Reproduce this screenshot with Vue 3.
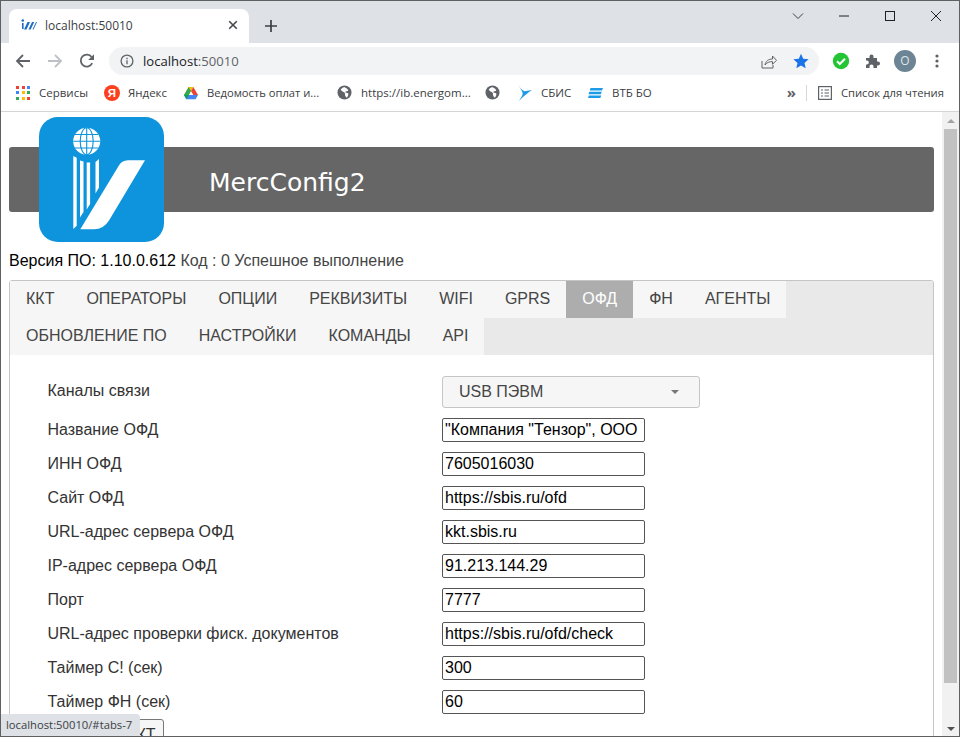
<script setup>
const tabs = [
  'ККТ', 'ОПЕРАТОРЫ', 'ОПЦИИ', 'РЕКВИЗИТЫ', 'WIFI', 'GPRS', 'ОФД', 'ФН', 'АГЕНТЫ',
  'ОБНОВЛЕНИЕ ПО', 'НАСТРОЙКИ', 'КОМАНДЫ', 'API'
]
const rows = [
  ['Название ОФД', '"Компания "Тензор", ООО'],
  ['ИНН ОФД', '7605016030'],
  ['Сайт ОФД', 'https://sbis.ru/ofd'],
  ['URL-адрес сервера ОФД', 'kkt.sbis.ru'],
  ['IP-адрес сервера ОФД', '91.213.144.29'],
  ['Порт', '7777'],
  ['URL-адрес проверки фиск. документов', 'https://sbis.ru/ofd/check'],
  ['Таймер С! (сек)', '300'],
  ['Таймер ФН (сек)', '60']
]
const gridColors = ['#ea4335', '#ea4335', '#4285f4', '#4285f4', '#fbbc04', '#34a853', '#34a853', '#fbbc04', '#ea4335']
</script>

<template>
  <div class="window">
    <div class="tabstrip">
      <div class="tab">
        <svg class="fav" width="16" height="16" viewBox="0 0 16 16">
          <circle cx="1.800" cy="3.500" r="1.300" fill="#1f6fc0" />
          <path d="M1 6h1.600v6H1zM3 12.500L6.500 5H9l-3.500 7.500zM7.500 12.500L11 5h2.200L9.700 12.500zM11.500 12.500L15 5h1l-3.500 7.500z" fill="#1f6fc0" />
        </svg>
        <span class="tabtitle">localhost:50010</span>
        <svg class="tabx" width="10" height="10" viewBox="0 0 10 10"><path d="M1.200 1.200l7.600 7.600M8.800 1.200l-7.600 7.600" stroke="#45484c" stroke-width="1.600" /></svg>
      </div>
      <svg class="plus" width="12" height="12" viewBox="0 0 12 12"><path d="M6 0v12M0 6h12" stroke="#3c4043" stroke-width="1.700" /></svg>
      <div class="winctl">
        <svg width="12" height="12" viewBox="0 0 12 12"><path d="M1 3.500l5 5 5-5" fill="none" stroke="#3c4043" /></svg>
        <svg width="12" height="12" viewBox="0 0 12 12"><path d="M1 6h10" stroke="#202124" /></svg>
        <svg width="12" height="12" viewBox="0 0 12 12"><rect x="1.500" y="1.500" width="9" height="9" fill="none" stroke="#202124" /></svg>
        <svg width="12" height="12" viewBox="0 0 12 12"><path d="M1 1l10 10M11 1L1 11" stroke="#202124" /></svg>
      </div>
    </div>

    <div class="toolbar">
      <svg class="navicon" width="16" height="16" viewBox="0 0 16 16"><path d="M15 8H2M8 2L2 8l6 6" fill="none" stroke="#5f6368" stroke-width="1.800" /></svg>
      <svg class="navicon" width="16" height="16" viewBox="0 0 16 16"><path d="M1 8h13M8 2l6 6-6 6" fill="none" stroke="#bdc1c6" stroke-width="1.800" /></svg>
      <svg class="navicon" width="16" height="16" viewBox="0 0 16 16"><path d="M13.200 10.200A6 6 0 1 1 12.600 4" fill="none" stroke="#5f6368" stroke-width="1.800" /><path d="M15 1.200V7H9.200z" fill="#5f6368" /></svg>
      <div class="omnibox">
        <svg class="info" width="14" height="14" viewBox="0 0 14 14"><circle cx="7" cy="7" r="5.900" fill="none" stroke="#5f6368" stroke-width="1.300" /><path d="M7 6.200v4M7 3.800v1.400" stroke="#5f6368" stroke-width="1.300" /></svg>
        <span class="url"><span class="host">localhost</span>:50010</span>
        <svg class="share" width="16" height="16" viewBox="0 0 16 16"><path d="M1 8v7h11v-3" fill="none" stroke="#5f6368" /><path d="M4 12c.6-4 3.500-6 7.500-6V3l4 4.300-4 4V8.600c-3 0-5.500.8-7.500 3.400z" fill="none" stroke="#5f6368" /></svg>
        <svg class="star" width="16" height="16" viewBox="0 0 16 16"><path d="M8 .8l2.200 5 5.400.5-4.100 3.600 1.200 5.300L8 12.400l-4.700 2.800 1.200-5.300L.4 6.300l5.400-.5z" fill="#1a73e8" /></svg>
      </div>
      <svg class="ext" width="18" height="18" viewBox="0 0 18 18"><circle cx="9" cy="9" r="8.200" fill="#23c534" /><path d="M5 9.200l2.800 2.800L13 6.800" fill="none" stroke="#fff" stroke-width="2" /></svg>
      <svg class="ext" width="16" height="16" viewBox="0 0 16 16"><path d="M1 5h3.500V3.500a2 2 0 0 1 4 0V5H12v3.500h1a2 2 0 0 1 0 4h-1V15H8.500v-1.500a2 2 0 0 0-4 0V15H1v-3.500h.8a2 2 0 0 0 0-4H1z" fill="#5f6368" /></svg>
      <span class="avatar">О</span>
      <svg class="kebab" width="4" height="14" viewBox="0 0 4 14"><circle cx="2" cy="2" r="1.600" fill="#5f6368" /><circle cx="2" cy="7" r="1.600" fill="#5f6368" /><circle cx="2" cy="12" r="1.600" fill="#5f6368" /></svg>
    </div>

    <div class="bookmarks">
      <div class="bm">
        <span class="apps"><i v-for="(c, i) in gridColors" :key="i" :style="{ background: c }"></i></span>
        <span>Сервисы</span>
      </div>
      <div class="bm tight">
        <svg width="16" height="16" viewBox="0 0 16 16"><circle cx="8" cy="8" r="8" fill="#fc3f1d" /><text x="8" y="12.200" text-anchor="middle" font-family="Liberation Sans, sans-serif" font-weight="700" font-size="11.500" fill="#fff">Я</text></svg>
        <span>Яндекс</span>
      </div>
      <div class="bm">
        <svg width="14" height="14" viewBox="0 0 16 16"><path d="M5.300 1h5.400l-5.300 9.300H0z" fill="#fbbc04" /><path d="M10.700 1L16 10.300h-5.300L8 5.700z" fill="#ea4335" /><path d="M0 10.300h16l-2.700 4.700H2.700z" fill="#4285f4" /><path d="M5.400 10.300L2.700 15 0 10.300z" fill="#0f9d58" /><path d="M5.300 1L8 5.700 5.400 10.300H0z" fill="#34a853" /></svg>
        <span class="narrow">Ведомость оплат и...</span>
      </div>
      <div class="bm">
        <svg width="15" height="15" viewBox="0 0 16 16"><circle cx="8" cy="8" r="7.500" fill="#5f6368" /><path d="M8 2c-2 .5-3 1.500-4 3 1 2 3 2 4 3s0 2.500 1 4l1.500 1.500c1-1 2-3 1.500-4.500-1-1-2.500-.5-3.500-1.500.5-1 2.500-.8 3.500-1.500-.5-1.500-1.500-2.500-4-3.500z" fill="#fff" /></svg>
        <span>https://ib.energom...</span>
      </div>
      <div class="bm">
        <svg width="15" height="15" viewBox="0 0 16 16"><circle cx="8" cy="8" r="7.500" fill="#5f6368" /><path d="M8 2c-2 .5-3 1.500-4 3 1 2 3 2 4 3s0 2.500 1 4l1.500 1.500c1-1 2-3 1.500-4.500-1-1-2.500-.5-3.500-1.500.5-1 2.500-.8 3.500-1.500-.5-1.500-1.500-2.500-4-3.500z" fill="#fff" /></svg>
      </div>
      <div class="bm">
        <svg width="14" height="16" viewBox="0 0 14 16"><path d="M0 0C2 3 4 5 6.500 6.300L14 5C10 7.500 6.500 10.500 1 16 4 11 5 9.500 4.500 7.500 3.500 5 1.500 2 0 0z" fill="#1e9be8" /></svg>
        <span>СБИС</span>
      </div>
      <div class="bm">
        <svg width="15" height="10" viewBox="0 0 15 10"><path d="M2.500 0H15l-1 2.400H1.700zM1.300 3.800h12.500l-1 2.400H.5zM.8 7.600h12.500l-1 2.400H0z" fill="#1e9be8" /></svg>
        <span>ВТБ БО</span>
      </div>
      <span class="more">»</span>
      <span class="sep"></span>
      <div class="bm reading">
        <svg width="14" height="14" viewBox="0 0 14 14"><rect x=".6" y=".6" width="12.800" height="12.800" fill="none" stroke="#5f6368" stroke-width="1.200" /><path d="M3 4h2M6.500 4H11M3 7h2M6.500 7H11M3 10h2M6.500 10H11" stroke="#5f6368" stroke-width="1.200" /></svg>
        <span>Список для чтения</span>
      </div>
    </div>

    <div class="viewport">
      <main class="page">
        <header class="banner">
          <svg class="logo" width="125" height="125" viewBox="0 0 125 125">
            <rect width="125" height="125" rx="19" fill="#0e94dc" />
            <circle cx="47.700" cy="24.300" r="13.500" fill="#fff" />
            <g fill="none" stroke="#0e94dc" stroke-width="1.100">
              <ellipse cx="47.700" cy="24.300" rx="6.500" ry="13.500" />
              <path d="M47.700 10.800v27M34.200 24.300h27M36 17.500h23.400M36 31h23.400" />
            </g>
            <path d="M34.300 39l3.400 1.800v68l-3.400 3.200zM41 43.500l3.500 1v50.500L41 100.500zM47.700 45.500h3.400v41.500l-3.400 5.500zM56.500 45l3.500-3v28.500l-3.500 6z" fill="#fff" />
            <path d="M41.300 112.300L79.300 49.500Q82.500 43.300 89 43.300H106L70 103.500Q64.500 112.300 55 112.300z" fill="#fff" />
          </svg>
          <h1 class="title">MercConfig2</h1>
        </header>

        <p class="version">Версия ПО: 1.10.0.612 <span class="status">Код : 0 Успешное выполнение</span></p>

        <section class="tabs">
          <nav class="tabbar">
            <a v-for="t in tabs" :key="t" class="tabitem" :class="{ active: t === 'ОФД' }">{{ t }}</a>
          </nav>
          <div class="panel">
            <div class="form">
              <label class="lbl first">Каналы связи</label>
              <div class="select">
                <span>USB ПЭВМ</span>
                <i class="caret"></i>
              </div>
              <template v-for="r in rows" :key="r[0]">
                <label class="lbl">{{ r[0] }}</label>
                <input class="field" type="text" :value="r[1]" />
              </template>
            </div>
            <button class="savebtn">ЗАПИСЬ В ККТ</button>
          </div>
        </section>
      </main>
      <aside class="scrollbar">
        <i class="arrow up"></i>
        <div class="thumb"></div>
        <i class="arrow down"></i>
      </aside>
    </div>

    <div class="statusbubble">localhost:50010/#tabs-7</div>
  </div>
</template>

<style>
html, body { margin: 0; padding: 0; overflow: hidden; background: #fff; }
</style>

<style scoped>
.window {
  position: relative;
  width: 960px;
  height: 737px;
  box-sizing: border-box;
  border: 1px solid #5f6062;
  overflow: hidden;
  display: flex;
  flex-direction: column;
  font-family: "Liberation Sans", Arial, sans-serif;
  background: #fff;
}
.tabstrip {
  flex: none;
  height: 42px;
  background: #dee1e6;
  display: flex;
  align-items: flex-end;
  padding-left: 8px;
  position: relative;
}
.tab {
  width: 240px;
  height: 34px;
  box-sizing: border-box;
  background: #fff;
  border-radius: 8px 8px 0 0;
  display: flex;
  align-items: center;
  padding: 0 11px 2px 12px;
}
.fav { flex: none; }
.tabtitle {
  margin-left: 8px;
  font: 12px "Open Sans", sans-serif;
  color: #3c4043;
  flex: 1;
}
.tabx { flex: none; }
.plus { margin: 0 0 11px 16px; }
.winctl {
  margin-left: auto;
  align-self: flex-start;
  display: flex;
  gap: 34px;
  padding: 9px 17px 0 0;
}
.toolbar {
  flex: none;
  height: 32px;
  display: flex;
  align-items: flex-start;
  padding: 4px 0 0 14px;
  box-sizing: border-box;
}
.navicon { margin: 6px 16px 0 0; flex: none; }
.omnibox {
  margin-left: -2px;
  width: 710px;
  height: 28px;
  flex: none;
  background: #f1f3f4;
  border-radius: 14px;
  display: flex;
  align-items: center;
  padding: 0 10px 0 11px;
  box-sizing: border-box;
}
.info { flex: none; }
.url { margin-left: 9px; font: 13.100px "Open Sans", sans-serif; color: #5f6368; flex: 1; }
.host { color: #202124; }
.share { margin-right: 16px; }
.ext { margin: 5px 0 0 13px; flex: none; }
.ext + .ext { margin: 6px 0 0 15px; }
.avatar {
  margin: 3px 0 0 13px;
  width: 22px;
  height: 22px;
  border-radius: 50%;
  background: #6c8493;
  color: #dfe6ea;
  font: 12px/22px "Open Sans", sans-serif;
  text-align: center;
  flex: none;
}
.kebab { margin: 7px 0 0 19px; flex: none; }
.bookmarks {
  flex: none;
  height: 37px;
  box-sizing: border-box;
  padding: 0 15px 1px 15px;
  border-bottom: 1px solid #d5d5d5;
  display: grid;
  grid-template-columns: 88px 80px 153px 148px 33px 70px 1fr auto 12px auto;
  align-items: center;
  font: 11.500px "Open Sans", sans-serif;
  color: #3c4043;
}
.bm { display: flex; align-items: center; gap: 9px; white-space: nowrap; }
.bm.tight { gap: 8px; }
.narrow { font-size: 11.200px; }
.apps {
  width: 14px;
  height: 14px;
  display: grid;
  grid-template-columns: repeat(3, 3px);
  grid-template-rows: repeat(3, 3px);
  gap: 2.500px;
}
.more { font-size: 15px; line-height: 15px; font-weight: 700; color: #5f6368; margin-right: 10px; }
.sep { width: 1px; height: 16px; background: #d5d7da; }
.reading { font-size: 11.250px; }
.viewport {
  flex: 1;
  min-height: 0;
  display: flex;
  overflow: hidden;
}
.page {
  flex: 1;
  min-width: 0;
  padding: 35px 8px 0 8px;
  box-sizing: border-box;
  color: #333;
  font-size: 16px;
}
.banner {
  position: relative;
  height: 65px;
  box-sizing: border-box;
  background: #666;
  border-radius: 3px;
  display: flex;
  align-items: center;
  padding: 5px 0 0 200px;
}
.logo { position: absolute; left: 30px; top: -30px; }
.title {
  margin: 0;
  color: #fff;
  font: 400 25px "DejaVu Sans", sans-serif;
}
.version {
  margin: 39px 0 0;
  line-height: 19px;
  color: #000;
}
.status { color: #454545; }
.tabs {
  margin-top: 10px;
  border: 1px solid #c5c5c5;
  border-radius: 3px;
}
.tabbar {
  display: flex;
  flex-wrap: wrap;
  background: #e9e9e9;
  border-radius: 3px 3px 0 0;
}
.tabitem {
  line-height: 20.800px;
  padding: 8px 16px;
  background: #f6f6f6;
  color: #454545;
}
.tabitem.active { background: #adadad; color: #fff; }
.panel { padding: 21.400px 38px 0 37.500px; }
.form {
  display: grid;
  grid-template-columns: 394.500px 1fr;
  row-gap: 10px;
  align-items: center;
}
.lbl { color: #333; line-height: 18px; }
.lbl.first { position: relative; top: -1px; }
.select {
  width: 258px;
  height: 32px;
  box-sizing: border-box;
  border: 1px solid #c5c5c5;
  border-radius: 3px;
  background: #f6f6f6;
  color: #454545;
  display: flex;
  align-items: center;
  justify-content: space-between;
  padding: 0 20px 0 16px;
}
.caret {
  width: 0;
  height: 0;
  border-left: 4px solid transparent;
  border-right: 4px solid transparent;
  border-top: 4px solid #777;
}
.field {
  width: 203px;
  height: 24px;
  box-sizing: border-box;
  border: 1px solid #555;
  border-radius: 2px;
  padding: 1px 2px;
  font: 16px "Liberation Sans", Arial, sans-serif;
  color: #000;
  background: #fff;
  outline: none;
}
.savebtn {
  display: block;
  margin: 5px 0 0 -28px;
  width: 144px;
  height: 32px;
  box-sizing: border-box;
  border: 1px solid #777;
  border-radius: 3px;
  background: #f6f6f6;
  color: #333;
  font: 16px "Liberation Sans", Arial, sans-serif;
  text-align: right;
  padding: 0 7px 0 0;
}
.scrollbar {
  flex: none;
  width: 17px;
  background: #f1f1f1;
  display: flex;
  flex-direction: column;
  align-items: center;
}
.thumb {
  width: 13px;
  flex: 1;
  background: #c1c1c1;
}
.arrow {
  width: 0;
  height: 0;
  flex: none;
  border-left: 4px solid transparent;
  border-right: 4px solid transparent;
}
.arrow.up { border-bottom: 4px solid #a3a3a3; margin: 7px 0 6px; }
.arrow.down { border-top: 4px solid #505050; margin: 44px 0 5px; }
.statusbubble {
  position: absolute;
  left: 0;
  bottom: 0;
  width: 139px;
  height: 22px;
  box-sizing: border-box;
  background: #dee1e6;
  border-top-right-radius: 4px;
  padding-left: 5px;
  font: 11.250px/22px "Open Sans", sans-serif;
  color: #3c4043;
  white-space: nowrap;
}
</style>
